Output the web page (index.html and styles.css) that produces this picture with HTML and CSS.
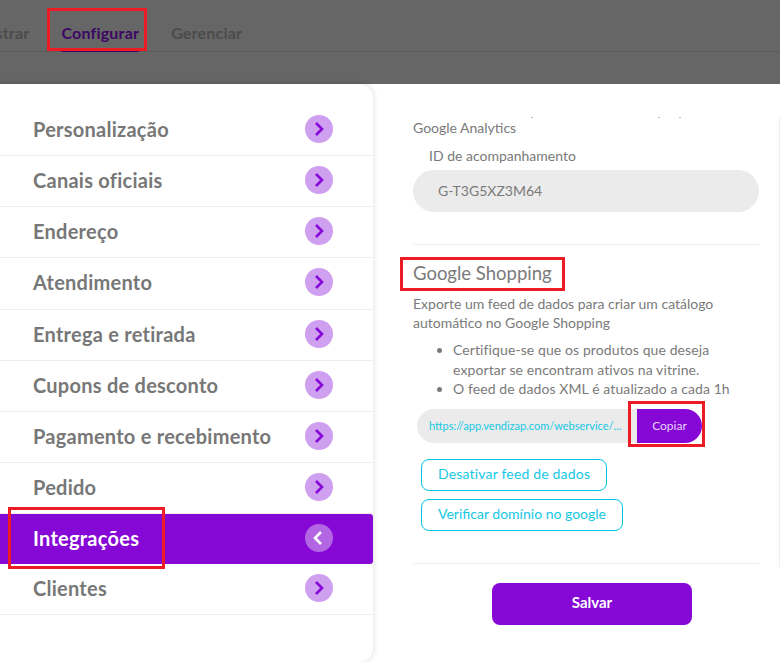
FILE: index.html
```html
<html>
<head>
  <title>Configurar</title>
  <link rel="stylesheet" href="styles.css">
</head>
<body>
  <header class="topbar">
    <nav class="tabs">
      <a class="tab">Mostrar</a>
      <a class="tab tab-active">Configurar</a>
      <a class="tab">Gerenciar</a>
    </nav>
  </header>

  <div class="main">
    <ul class="menu">
      <li class="menu-item">Personalização <span class="arrow"><svg width="12" height="16" viewBox="0 0 12 16"><path d="M3 2 L9 8 L3 14" /></svg></span></li>
      <li class="menu-item">Canais oficiais <span class="arrow"><svg width="12" height="16" viewBox="0 0 12 16"><path d="M3 2 L9 8 L3 14" /></svg></span></li>
      <li class="menu-item">Endereço <span class="arrow"><svg width="12" height="16" viewBox="0 0 12 16"><path d="M3 2 L9 8 L3 14" /></svg></span></li>
      <li class="menu-item">Atendimento <span class="arrow"><svg width="12" height="16" viewBox="0 0 12 16"><path d="M3 2 L9 8 L3 14" /></svg></span></li>
      <li class="menu-item">Entrega e retirada <span class="arrow"><svg width="12" height="16" viewBox="0 0 12 16"><path d="M3 2 L9 8 L3 14" /></svg></span></li>
      <li class="menu-item">Cupons de desconto <span class="arrow"><svg width="12" height="16" viewBox="0 0 12 16"><path d="M3 2 L9 8 L3 14" /></svg></span></li>
      <li class="menu-item">Pagamento e recebimento <span class="arrow"><svg width="12" height="16" viewBox="0 0 12 16"><path d="M3 2 L9 8 L3 14" /></svg></span></li>
      <li class="menu-item">Pedido <span class="arrow"><svg width="12" height="16" viewBox="0 0 12 16"><path d="M3 2 L9 8 L3 14" /></svg></span></li>
      <li class="menu-item menu-item-active">Integrações <span class="arrow"><svg width="12" height="16" viewBox="0 0 12 16"><path d="M8 2 L2 8 L8 14" /></svg></span></li>
      <li class="menu-item">Clientes <span class="arrow"><svg width="12" height="16" viewBox="0 0 12 16"><path d="M3 2 L9 8 L3 14" /></svg></span></li>
    </ul>

    <div class="panel">
      <div class="panel-scroll">
        <div class="cut-line"><i></i><i></i><i></i></div>
        <section class="analytics">
          <p class="analytics-title">Google Analytics</p>
          <label class="field-label">ID de acompanhamento</label>
          <div class="field">G-T3G5XZ3M64</div>
        </section>

        <section class="shopping">
          <h2>Google Shopping</h2>
          <p class="shopping-text">Exporte um feed de dados para criar um catálogo automático no Google Shopping</p>
          <ul class="shopping-list">
            <li>Certifique-se que os produtos que deseja exportar se encontram ativos na vitrine.</li>
            <li>O feed de dados XML é atualizado a cada 1h</li>
          </ul>
          <div class="copy-row">
            <span class="copy-url">https://app.vendizap.com/webservice/...</span>
            <button class="copy-btn">Copiar</button>
          </div>
          <button class="outline-btn">Desativar feed de dados</button>
          <button class="outline-btn">Verificar domínio no google</button>
        </section>
      </div>
      <div class="panel-footer">
        <button class="save-btn">Salvar</button>
      </div>
    </div>
  </div>

  <!-- red marks drawn over the screenshot -->
  <div class="mark mark-tab"></div>
  <div class="mark mark-title"></div>
  <div class="mark mark-copy"></div>
  <div class="mark mark-menu"></div>
</body>
</html>
```

FILE: styles.css
```css
html, body {
  height: 662px;
  overflow: hidden;
}
body {
  font-family: Lato, "Liberation Sans", sans-serif;
  margin: 0;
  padding: 0;
  background-color: #fff;
  color: #7a7a7a;
  position: relative;
}
.topbar {
  background-color: #666;
  height: 84px;
  box-sizing: border-box;
  padding-top: 18px;
  overflow: hidden;
}
.tabs {
  display: flex;
  gap: 32px;
  height: 33px;
  margin-left: -29px;
  border-bottom: 1px solid #5c5c5c;
}
.tab {
  font-size: 16px;
  font-weight: 700;
  letter-spacing: 0.2px;
  color: #4c4c4c;
  line-height: 30px;
  height: 34px;
  box-sizing: border-box;
}
.tab-active {
  color: #3d0764;
  border-bottom: 1px solid #3d0764;
}
.main {
  display: flex;
}
.menu {
  list-style: none;
  margin: 0 0 0 -12px;
  padding: 21px 0 0;
  width: 385px;
  height: 578px;
  box-sizing: border-box;
  background-color: #fff;
  border-radius: 14px;
  box-shadow: 0 0 6px rgba(0, 0, 0, 0.15);
}
.menu-item {
  height: 51.15px;
  box-sizing: border-box;
  padding: 0 40px 2px 45px;
  display: flex;
  align-items: center;
  justify-content: space-between;
  font-size: 20px;
  font-weight: 700;
  letter-spacing: 0.25px;
  color: #777;
  border-bottom: 1px solid #eee;
}
.menu-item-active {
  background-color: #8608d6;
  color: #fff;
  border-bottom: 0;
  border-radius: 0 3px 3px 0;
  height: 50px;
}
.arrow {
  width: 28px;
  height: 28px;
  border-radius: 50%;
  background-color: #cf9ff0;
  display: flex;
  align-items: center;
  justify-content: center;
}
.arrow path {
  fill: none;
  stroke: #8608d6;
  stroke-width: 2.6;
}
.menu-item-active .arrow {
  background-color: #b266e4;
}
.menu-item-active .arrow path {
  stroke: #fff;
}
.panel {
  flex: 1;
  padding: 33px 0 0 40px;
}
.panel-scroll {
  height: 450px;
  box-sizing: border-box;
  padding-right: 20px;
  border-right: 1px solid #eee;
}
/* bottoms of a line scrolled out of view */
.cut-line {
  display: flex;
  height: 1px;
  padding-left: 118px;
}
.cut-line i {
  width: 2px;
  background-color: #bbb;
}
.cut-line i + i {
  margin-left: 125px;
}
.cut-line i + i + i {
  margin-left: 19px;
}
.analytics {
  padding-top: 1px;
  height: 127px;
  box-sizing: border-box;
  border-bottom: 1px solid #eee;
}
.analytics-title {
  margin: 0;
  font-size: 14px;
  line-height: 18px;
}
.field-label {
  display: block;
  margin: 10px 0 0 16px;
  font-size: 14px;
  line-height: 18px;
}
.field {
  margin-top: 5px;
  height: 42px;
  line-height: 42px;
  padding-left: 25px;
  background-color: #ebebeb;
  border-radius: 21px;
  font-size: 14px;
}
.shopping {
  height: 319px;
  box-sizing: border-box;
  padding-top: 16px;
  border-bottom: 1px solid #eee;
}
.shopping h2 {
  margin: 0;
  font-size: 18.5px;
  font-weight: 400;
  line-height: 24px;
}
.shopping-text {
  margin: 9px 0 0;
  font-size: 14px;
  line-height: 19px;
}
.shopping-list {
  margin: 8px 0 0;
  padding-left: 40px;
  font-size: 14px;
  letter-spacing: 0.1px;
  line-height: 19.5px;
}
.copy-row {
  display: flex;
  margin: 10px 0 0 4px;
  width: 285px;
  height: 34px;
  background-color: #ebebeb;
  border-radius: 17px;
}
.copy-url {
  flex: 1;
  padding-left: 12px;
  font-size: 11px;
  line-height: 34px;
  color: #14c8e4;
}
.copy-btn {
  width: 65px;
  border: 0;
  padding: 0;
  background-color: #8608d6;
  border-radius: 0 17px 17px 0;
  color: #e8d5f8;
  font-family: inherit;
  font-size: 12px;
}
.outline-btn {
  display: block;
  margin: 16px 0 -8px 8px;
  height: 32px;
  padding: 0 16px 2px;
  background-color: #fff;
  border: 1px solid #00c4e0;
  border-radius: 8px;
  color: #14c8e4;
  font-family: inherit;
  font-size: 14px;
  letter-spacing: 0.18px;
}
.outline-btn + .outline-btn {
  letter-spacing: 0;
}
.panel-footer {
  padding: 16px 88px 0 79px;
}
.save-btn {
  display: block;
  width: 200px;
  height: 42px;
  padding: 0 0 4px;
  border: 0;
  border-radius: 8px;
  background-color: #8608d6;
  color: #fff;
  font-family: inherit;
  font-size: 15px;
  font-weight: 700;
}
.mark {
  position: absolute;
  box-sizing: border-box;
  border: 3px solid #ed1c24;
}
.mark-tab {
  left: 47px;
  top: 8px;
  width: 100px;
  height: 43px;
}
.mark-title {
  left: 400px;
  top: 257px;
  width: 165px;
  height: 34px;
}
.mark-copy {
  left: 628px;
  top: 401px;
  width: 77px;
  height: 46px;
}
.mark-menu {
  left: 8px;
  top: 507px;
  width: 157px;
  height: 62px;
}
```
